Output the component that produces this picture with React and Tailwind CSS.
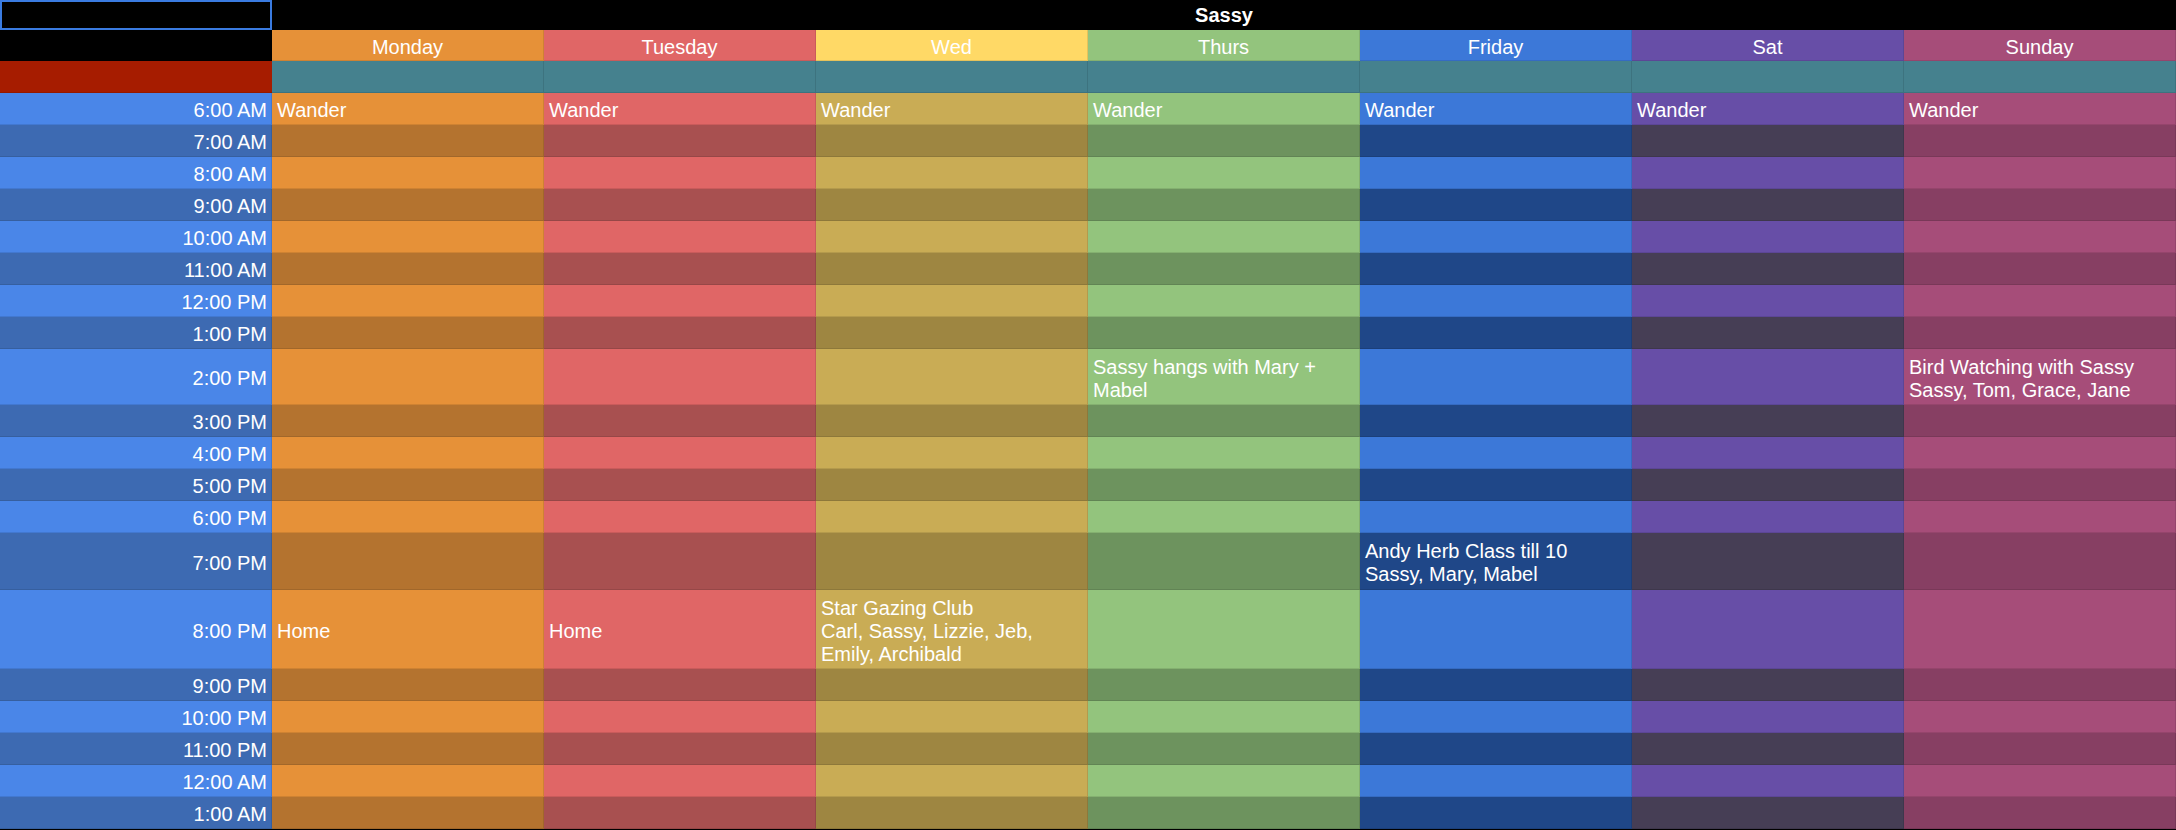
const days = [
  { name: "Monday", head: "bg-[#e69138]", light: "bg-[#e69138]", dark: "bg-[#b4732f]" },
  { name: "Tuesday", head: "bg-[#e06666]", light: "bg-[#e06666]", dark: "bg-[#a85050]" },
  { name: "Wed", head: "bg-[#ffd966]", light: "bg-[#c9ac55]", dark: "bg-[#9e8641]" },
  { name: "Thurs", head: "bg-[#93c47d]", light: "bg-[#93c47d]", dark: "bg-[#6d935e]" },
  { name: "Friday", head: "bg-[#3c78d8]", light: "bg-[#3c78d8]", dark: "bg-[#1f4788]" },
  { name: "Sat", head: "bg-[#674ea7]", light: "bg-[#674ea7]", dark: "bg-[#463e55]" },
  { name: "Sunday", head: "bg-[#a64d79]", light: "bg-[#a64d79]", dark: "bg-[#873f63]" },
];

const wander = ["Wander"];

// events keyed by day index, each is a list of lines
const rows = [
  { time: "6:00 AM", h: "h-[32px]", events: { 0: wander, 1: wander, 2: wander, 3: wander, 4: wander, 5: wander, 6: wander } },
  { time: "7:00 AM", h: "h-[32px]" },
  { time: "8:00 AM", h: "h-[32px]" },
  { time: "9:00 AM", h: "h-[32px]" },
  { time: "10:00 AM", h: "h-[32px]" },
  { time: "11:00 AM", h: "h-[32px]" },
  { time: "12:00 PM", h: "h-[32px]" },
  { time: "1:00 PM", h: "h-[32px]" },
  {
    time: "2:00 PM",
    h: "h-[56px]",
    events: {
      3: ["Sassy hangs with Mary +", "Mabel"],
      6: ["Bird Watching with Sassy", "Sassy, Tom, Grace, Jane"],
    },
  },
  { time: "3:00 PM", h: "h-[32px]" },
  { time: "4:00 PM", h: "h-[32px]" },
  { time: "5:00 PM", h: "h-[32px]" },
  { time: "6:00 PM", h: "h-[32px]" },
  { time: "7:00 PM", h: "h-[57px]", events: { 4: ["Andy Herb Class till 10", "Sassy, Mary, Mabel"] } },
  {
    time: "8:00 PM",
    h: "h-[79px]",
    events: {
      0: ["Home"],
      1: ["Home"],
      2: ["Star Gazing Club", "Carl, Sassy, Lizzie, Jeb,", "Emily, Archibald"],
    },
  },
  { time: "9:00 PM", h: "h-[32px]" },
  { time: "10:00 PM", h: "h-[32px]" },
  { time: "11:00 PM", h: "h-[32px]" },
  { time: "12:00 AM", h: "h-[32px]" },
  { time: "1:00 AM", h: "h-[32px]" },
];

const Cell = ({ className, children }) => (
  <div className={`flex items-center border-r border-b border-black/10 pt-[4px] ${className}`}>
    {children}
  </div>
);

const App = () => {
  return (
    <div className="h-screen w-full overflow-hidden bg-black font-['Liberation_Sans',Arial,sans-serif] text-[20px] leading-[23px] text-white">
      <div className="grid w-[2176px] grid-cols-[repeat(8,272px)]">
        {/* title row */}
        <div className="h-[30px] border-2 border-[#3a7be0] bg-black" />
        <div className="col-span-7 flex h-[30px] items-center justify-center pt-[1px] font-bold">Sassy</div>

        {/* day names */}
        <div className="h-[31px] bg-black" />
        {days.map((d) => (
          <Cell key={d.name} className={`h-[31px] justify-center ${d.head}`}>
            {d.name}
          </Cell>
        ))}

        {/* blank band */}
        <div className="h-[32px] border-b border-black/10 bg-[#a61c00]" />
        {days.map((d) => (
          <Cell key={d.name + "-band"} className="h-[32px] bg-[#45818e]" />
        ))}

        {rows.map((row, i) => {
          const dark = i % 2 === 1;
          return [
            <Cell
              key={row.time}
              className={`${row.h} justify-end pr-[4px] ${dark ? "bg-[#3d6ab2]" : "bg-[#4a86e8]"}`}
            >
              {row.time}
            </Cell>,
            ...days.map((d, j) => {
              const lines = row.events && row.events[j];
              return (
                <Cell key={row.time + d.name} className={`${row.h} pl-[5px] ${dark ? d.dark : d.light}`}>
                  {lines && (
                    <div className="whitespace-nowrap">
                      {lines.map((l) => (
                        <div key={l}>{l}</div>
                      ))}
                    </div>
                  )}
                </Cell>
              );
            }),
          ];
        })}
      </div>
    </div>
  );
};

export default App;
